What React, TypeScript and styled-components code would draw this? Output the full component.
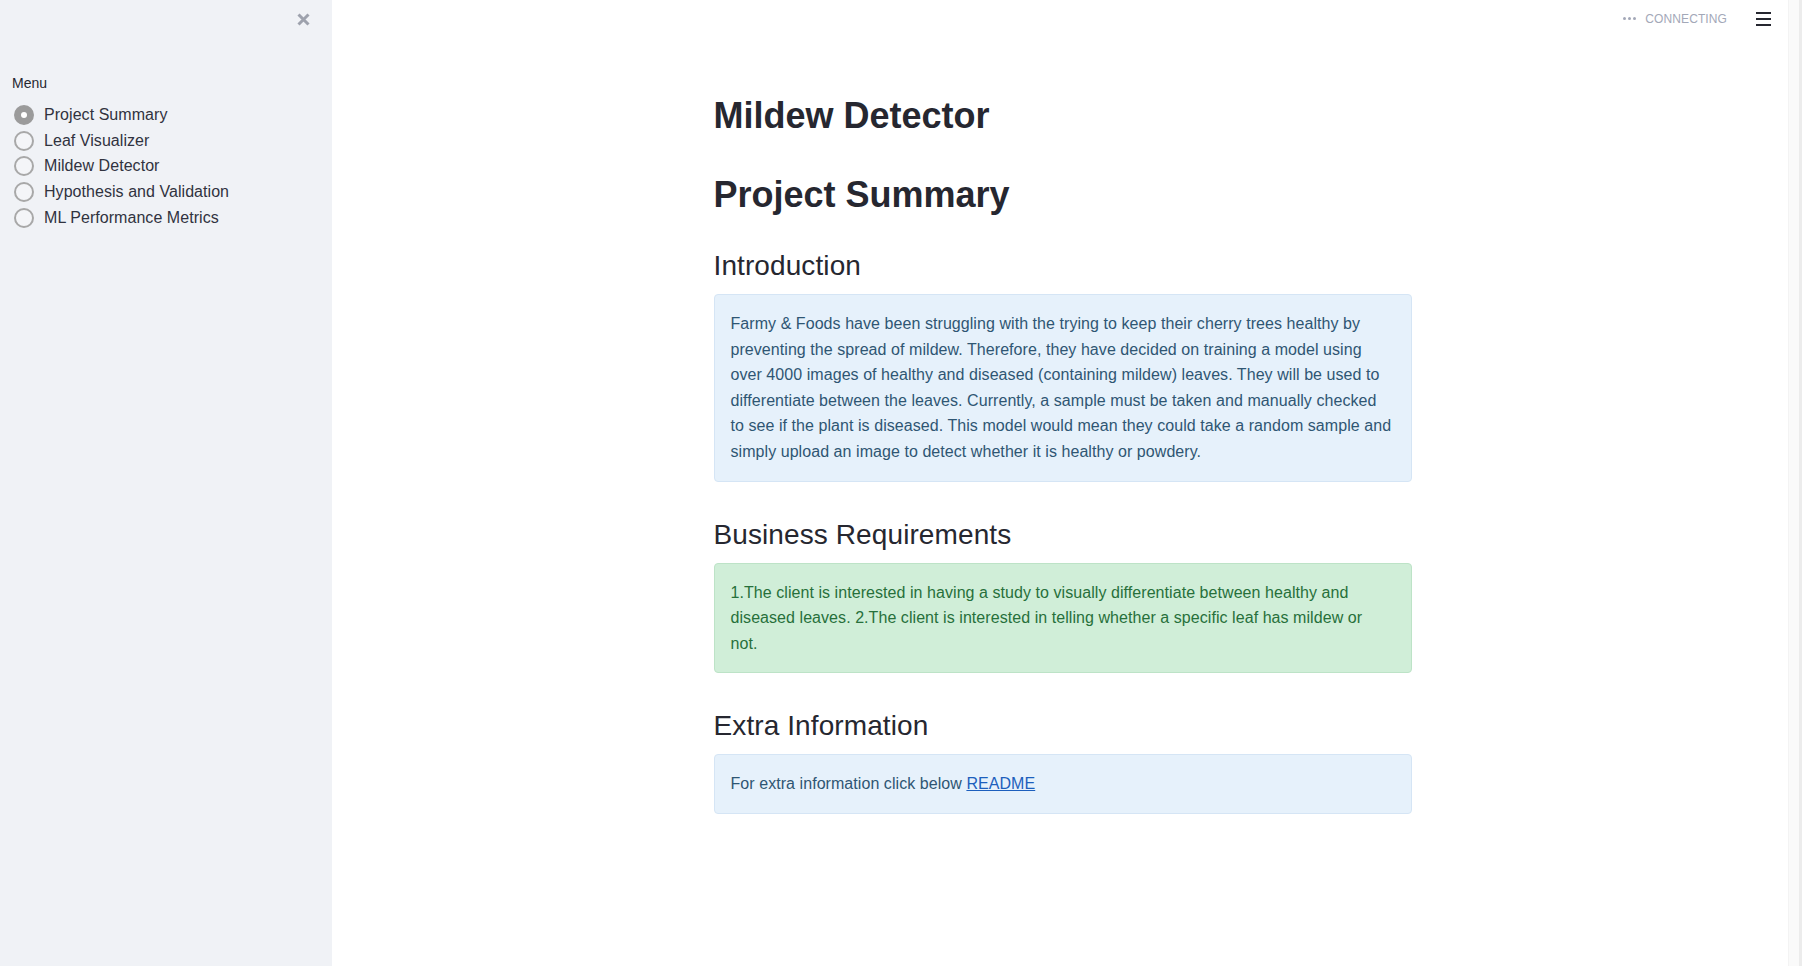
import React, { useState } from "react";
import styled, { createGlobalStyle } from "styled-components";

const GlobalStyle = createGlobalStyle`
  html, body {
    margin: 0;
    padding: 0;
    background: #ffffff;
    font-family: "Liberation Sans", Arial, sans-serif;
    color: #262730;
  }
`;

const Page = styled.div`
  display: flex;
  width: 100%;
  height: 966px;
  overflow: hidden;
`;

const Sidebar = styled.aside`
  width: 332px;
  flex-shrink: 0;
  background: #f0f2f6;
  display: flex;
  flex-direction: column;
  padding: 12px 0 0 12px;
  box-sizing: border-box;
`;

const CloseRow = styled.div`
  display: flex;
  justify-content: flex-end;
  padding-right: 21px;
  height: 16px;
`;

const MenuLabel = styled.div`
  font-size: 14px;
  line-height: 18px;
  margin-top: 46px;
  color: #262730;
`;

const RadioList = styled.div`
  display: flex;
  flex-direction: column;
  margin-top: 10px;
  padding-left: 2px;
`;

const RadioRow = styled.label`
  display: flex;
  align-items: center;
  height: 25.7px;
  font-size: 16px;
  color: #31333f;
  letter-spacing: 0.05px;
  cursor: pointer;
`;

const RadioDot = styled.span<{ $checked: boolean }>`
  width: 20px;
  height: 20px;
  box-sizing: border-box;
  border-radius: 50%;
  margin-right: 10px;
  border: 2px solid ${(p) => (p.$checked ? "#9b9b9b" : "#a8a8a8")};
  background: ${(p) => (p.$checked ? "#9b9b9b" : "#f4f5f8")};
  display: flex;
  align-items: center;
  justify-content: center;
  &::after {
    content: "";
    width: 6px;
    height: 6px;
    border-radius: 50%;
    background: #ffffff;
    display: ${(p) => (p.$checked ? "block" : "none")};
  }
`;

const Main = styled.main`
  flex: 1;
  position: relative;
  display: flex;
  justify-content: center;
`;

const TopBar = styled.div`
  position: absolute;
  top: 0;
  right: 17px;
  height: 37px;
  display: flex;
  align-items: center;
  gap: 29px;
`;

const Status = styled.div`
  display: flex;
  align-items: center;
  gap: 9px;
  font-family: "Liberation Sans", Arial, sans-serif;
  font-size: 12px;
  color: #a3a8b8;
  letter-spacing: 0.1px;
`;

const Dots = styled.span`
  display: flex;
  gap: 2px;
  span {
    width: 3px;
    height: 3px;
    border-radius: 50%;
    background: #a3a8b8;
  }
`;

const Hamburger = styled.div`
  width: 15px;
  display: flex;
  flex-direction: column;
  gap: 4px;
  span {
    height: 2px;
    background: #262730;
  }
`;

const Content = styled.div`
  width: 698px;
  margin-left: 5px;
  padding-top: 94px;
  display: flex;
  flex-direction: column;
`;

const Title = styled.h1`
  margin: 0;
  font-size: 36px;
  line-height: 44px;
  font-weight: 700;
  color: #262730;
`;

const SecondTitle = styled(Title)`
  margin-top: 35px;
`;

const Section = styled.section`
  display: flex;
  flex-direction: column;
  gap: 10px;
  margin-top: 35px;
  &:first-of-type {
    margin-top: 31px;
  }
`;

const Subheader = styled.h2`
  margin: 0;
  font-size: 28px;
  line-height: 36px;
  font-weight: 400;
  color: #262730;
  letter-spacing: 0.1px;
`;

const Alert = styled.div<{ $kind: "info" | "success" }>`
  padding: 16px 19px 16px 16px;
  border-radius: 4px;
  font-size: 16px;
  line-height: 25.6px;
  letter-spacing: 0.06px;
  border: 1px solid ${(p) => (p.$kind === "info" ? "#d5e5f5" : "#bde3c7")};
  background: ${(p) => (p.$kind === "info" ? "#e6f1fb" : "#d0eed8")};
  color: ${(p) => (p.$kind === "info" ? "#2f5673" : "#27703b")};
`;

const Link = styled.a`
  color: #1d5fbd;
  text-decoration: underline;
`;

const Scrollbar = styled.div`
  width: 10px;
  flex-shrink: 0;
  background: #fafafa;
  border-left: 1px solid #f3f3f3;
  border-right: 3px solid #ececec;
`;

const pages = [
  "Project Summary",
  "Leaf Visualizer",
  "Mildew Detector",
  "Hypothesis and Validation",
  "ML Performance Metrics",
];

const App = () => {
  const [page, setPage] = useState(0);

  return (
    <Page>
      <GlobalStyle />
      <Sidebar>
        <CloseRow>
          <svg width="15" height="15" viewBox="0 0 15 15">
            <path d="M2.5 2.5 L12.5 12.5 M12.5 2.5 L2.5 12.5" stroke="#9ea2ad" strokeWidth="3" />
          </svg>
        </CloseRow>
        <MenuLabel>Menu</MenuLabel>
        <RadioList>
          {pages.map((name, i) => (
            <RadioRow key={name} onClick={() => setPage(i)}>
              <RadioDot $checked={page === i} />
              {name}
            </RadioRow>
          ))}
        </RadioList>
      </Sidebar>
      <Main>
        <TopBar>
          <Status>
            <Dots>
              <span />
              <span />
              <span />
            </Dots>
            CONNECTING
          </Status>
          <Hamburger>
            <span />
            <span />
            <span />
          </Hamburger>
        </TopBar>
        <Content>
          <Title>Mildew Detector</Title>
          <SecondTitle>Project Summary</SecondTitle>
          <Section>
            <Subheader>Introduction</Subheader>
            <Alert $kind="info">
              Farmy &amp; Foods have been struggling with the trying to keep their cherry trees healthy by
              preventing the spread of mildew. Therefore, they have decided on training a model using over
              4000 images of healthy and diseased (containing mildew) leaves. They will be used to
              differentiate between the leaves. Currently, a sample must be taken and manually checked to
              see if the plant is diseased. This model would mean they could take a random sample and simply
              upload an image to detect whether it is healthy or powdery.
            </Alert>
          </Section>
          <Section>
            <Subheader>Business Requirements</Subheader>
            <Alert $kind="success">
              1.The client is interested in having a study to visually differentiate between healthy and
              diseased leaves. 2.The client is interested in telling whether a specific leaf has mildew or
              not.
            </Alert>
          </Section>
          <Section>
            <Subheader>Extra Information</Subheader>
            <Alert $kind="info">
              For extra information click below <Link href="#">README</Link>
            </Alert>
          </Section>
        </Content>
      </Main>
      <Scrollbar />
    </Page>
  );
};

export default App;
